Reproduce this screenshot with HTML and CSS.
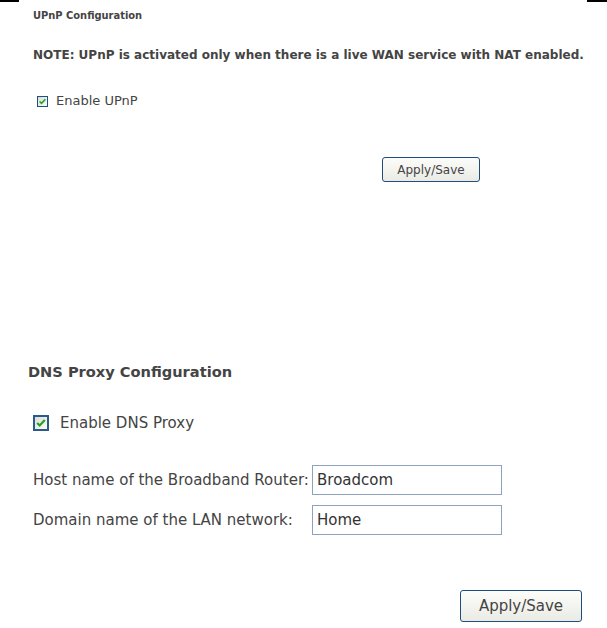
FILE: index.html
```html
<!DOCTYPE html>
<html>
<head>
<meta charset="utf-8">
<link rel="stylesheet" href="styles.css">
</head>
<body>
<div class="topbar"><span class="tick tick-left"></span><span class="tick tick-right"></span></div>
<section class="upnp">
  <div class="title-sm">UPnP Configuration</div>
  <div class="note">NOTE: UPnP is activated only when there is a live WAN service with NAT enabled.</div>
  <div class="check-row-sm">
    <span class="cb cb-sm"><svg viewBox="0 0 11 11" width="9" height="9"><path d="M2 5.5 L4.3 7.8 L9 2.8" fill="none" stroke="#22a322" stroke-width="2"/></svg></span>
    <span>Enable UPnP</span>
  </div>
  <div class="btn-row-sm"><button class="btn btn-sm">Apply/Save</button></div>
</section>
<section class="dns">
  <div class="title-lg">DNS Proxy Configuration</div>
  <div class="check-row-lg">
    <span class="cb cb-lg"><svg viewBox="0 0 11 11" width="12" height="12"><path d="M2 5.5 L4.3 7.8 L9 2.8" fill="none" stroke="#22a322" stroke-width="2"/></svg></span>
    <span>Enable DNS Proxy</span>
  </div>
  <div class="form">
    <div class="field"><span class="lbl">Host name of the Broadband Router:</span><span class="input">Broadcom</span></div>
    <div class="field"><span class="lbl">Domain name of the LAN network:</span><span class="input">Home</span></div>
  </div>
  <div class="btn-row-lg"><button class="btn btn-lg">Apply/Save</button></div>
</section>
</body>
</html>
```

FILE: styles.css
```css
html, body {
  margin: 0;
  padding: 0;
  background: #fff;
}
body {
  width: 607px;
  height: 628px;
  overflow: hidden;
  font-family: "DejaVu Sans", sans-serif;
  color: #444;
}
.topbar {
  display: flex;
  justify-content: space-between;
  height: 2px;
}
.tick {
  display: block;
  height: 2px;
  background: #000;
}
.tick-left { width: 19px; }
.tick-right { width: 20px; }

.upnp {
  padding-left: 33px;
  font-size: 11px;
}
.title-sm {
  font-family: "DejaVu Sans Condensed", "DejaVu Sans", sans-serif;
  font-weight: bold;
  font-size: 11px;
  line-height: 14px;
  margin-top: 7px;
}
.note {
  font-weight: bold;
  font-size: 12px;
  line-height: 15px;
  margin-top: 25px;
}
.check-row-sm {
  display: flex;
  align-items: center;
  gap: 8px;
  margin-top: 30px;
  padding-left: 4px;
  line-height: 16px;
  font-size: 13px;
}
.cb {
  display: flex;
  align-items: center;
  justify-content: center;
  box-sizing: border-box;
  border: 1px solid #1c5180;
  background: linear-gradient(135deg, #dcdcd6, #fbfbf9);
}
.cb-sm { width: 11px; height: 11px; }
.cb-lg { width: 16px; height: 16px; border-width: 2px; border-color: #2a5a8a; }

.btn-row-sm {
  display: flex;
  padding-left: 349px;
  margin-top: 48px;
}
.btn {
  font-family: inherit;
  color: #444;
  background: linear-gradient(#fcfcfa, #ebebe5);
  border: 1px solid #1f4d7c;
  border-radius: 3px;
  padding: 0;
  box-sizing: border-box;
}
.btn-sm {
  width: 98px;
  height: 25px;
  font-size: 12px;
}

.dns {
  padding-left: 28px;
  font-size: 15px;
  margin-top: 180px;
}
.title-lg {
  font-weight: bold;
  font-size: 14.6px;
  line-height: 20px;
}
.check-row-lg {
  display: flex;
  align-items: center;
  gap: 11px;
  margin-top: 32px;
  padding-left: 5px;
  line-height: 18px;
}
.form {
  display: flex;
  flex-direction: column;
  gap: 10px;
  margin-top: 33px;
  padding-left: 5px;
}
.field {
  display: flex;
  align-items: center;
}
.lbl {
  width: 279px;
}
.input {
  box-sizing: border-box;
  width: 190px;
  height: 30px;
  border: 1px solid #8fa2bb;
  padding-left: 4px;
  line-height: 28px;
  color: #333;
}
.btn-row-lg {
  display: flex;
  padding-left: 432px;
  margin-top: 55px;
}
.btn-lg {
  width: 122px;
  height: 32px;
  font-size: 15px;
}
```
